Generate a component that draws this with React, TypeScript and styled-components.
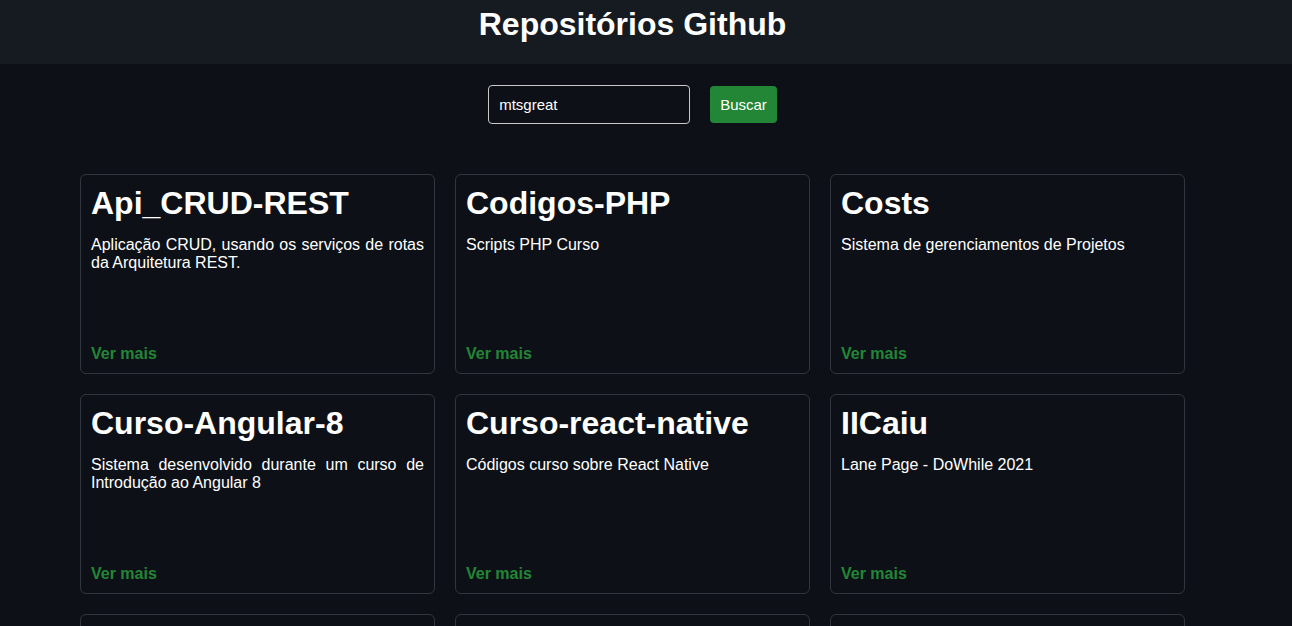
import React from "react";
import styled, { createGlobalStyle } from "styled-components";

const GlobalStyle = createGlobalStyle`
  * { box-sizing: border-box; }
  body {
    margin: 0;
    background: #0d1117;
    color: #ffffff;
    font-family: "Liberation Sans", Arial, sans-serif;
  }
`;

const Header = styled.header`
  width: 100%;
  height: 64px;
  background: #161b22;
`;

const HeaderInner = styled.div`
  width: 1265px;
  padding-top: 6px;
  text-align: center;
`;

const Title = styled.h1`
  margin: 0;
  font-size: 32px;
  font-weight: 700;
  color: #ffffff;
`;

const Main = styled.main`
  width: 1265px;
  padding: 21px 80px 0;
`;

const SearchBar = styled.form`
  display: flex;
  justify-content: center;
  align-items: center;
  gap: 20px;
  margin-bottom: 50px;
`;

const SearchInput = styled.input`
  width: 202px;
  height: 39px;
  padding: 0 10px;
  background: #0d1117;
  color: #ffffff;
  border: 1px solid #c9c9c9;
  border-radius: 4px;
  font-family: "Liberation Sans", Arial, sans-serif;
  font-size: 15px;
  outline: none;
`;

const SearchButton = styled.button`
  height: 37px;
  padding: 0 10px;
  background: #238636;
  color: #ffffff;
  border: none;
  border-radius: 4px;
  font-family: "Liberation Sans", Arial, sans-serif;
  font-size: 15px;
  cursor: pointer;
`;

const Grid = styled.section`
  display: grid;
  grid-template-columns: repeat(3, 355px);
  gap: 20px;
`;

const Card = styled.article`
  display: flex;
  flex-direction: column;
  height: 200px;
  padding: 10px;
  border: 1px solid #30363d;
  border-radius: 6px;
  background: #0d1117;
`;

const RepoName = styled.h2`
  margin: 0 0 14px;
  font-size: 32px;
  font-weight: 700;
  color: #ffffff;
`;

const Description = styled.p`
  margin: 0;
  flex: 1;
  font-size: 16px;
  line-height: 18px;
  text-align: justify;
  color: #ffffff;
`;

const MoreLink = styled.a`
  font-size: 16px;
  font-weight: 700;
  color: #238636;
  text-decoration: none;
`;

const repos = [
  { name: "Api_CRUD-REST", description: "Aplicação CRUD, usando os serviços de rotas da Arquitetura REST." },
  { name: "Codigos-PHP", description: "Scripts PHP Curso" },
  { name: "Costs", description: "Sistema de gerenciamentos de Projetos" },
  { name: "Curso-Angular-8", description: "Sistema desenvolvido durante um curso de Introdução ao Angular 8" },
  { name: "Curso-react-native", description: "Códigos curso sobre React Native" },
  { name: "IICaiu", description: "Lane Page - DoWhile 2021" },
  { name: "mtsgreat", description: "" },
  { name: "Portfolio", description: "" },
  { name: "Projeto-Final", description: "" },
];

export default function App() {
  return (
    <>
      <GlobalStyle />
      <Header>
        <HeaderInner>
          <Title>Repositórios Github</Title>
        </HeaderInner>
      </Header>
      <Main>
        <SearchBar onSubmit={(e) => e.preventDefault()}>
          <SearchInput defaultValue="mtsgreat" />
          <SearchButton type="submit">Buscar</SearchButton>
        </SearchBar>
        <Grid>
          {repos.map((r) => (
            <Card key={r.name}>
              <RepoName>{r.name}</RepoName>
              <Description>{r.description}</Description>
              <MoreLink href="#">Ver mais</MoreLink>
            </Card>
          ))}
        </Grid>
      </Main>
    </>
  );
}
